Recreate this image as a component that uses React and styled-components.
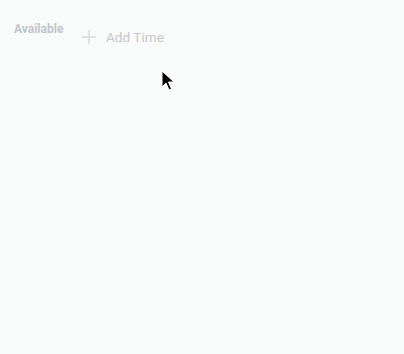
import styled, { createGlobalStyle } from "styled-components";

const Global = createGlobalStyle`
  html, body {
    margin: 0;
    background: #f9fbfa;
    font-family: Roboto, "Noto Sans", sans-serif;
  }
`;

const Page = styled.div`
  position: relative;
  width: 404px;
  height: 354px;
  background: #f9fbfa;
`;

const Row = styled.div`
  display: flex;
  align-items: flex-start;
  padding: 21px 0 0 14px;
`;

const Label = styled.div`
  font-size: 12px;
  font-weight: 700;
  color: #c2c5cb;
  line-height: 16px;
  width: 67px;
`;

const AddButton = styled.button`
  display: flex;
  align-items: center;
  gap: 9px;
  border: none;
  background: none;
  padding: 0;
  margin-top: 8px;
  font-family: inherit;
  font-size: 13.6px;
  color: #c6c7c9;
  cursor: pointer;
`;

const Cursor = styled.svg`
  position: absolute;
  left: 161px;
  top: 70px;
`;

export default function App() {
  return (
    <Page>
      <Global />
      <Row>
        <Label>Available</Label>
        <AddButton>
          <svg width="16" height="16" viewBox="0 0 16 16">
            <path d="M8 1v14M1 8h14" stroke="#d9dadc" strokeWidth="1.5" />
          </svg>
          Add Time
        </AddButton>
      </Row>
      <Cursor width="14" height="22" viewBox="0 0 14 22">
        <path
          d="M1 1v16l4-4 3 7 2.5-1-3-7H13z"
          fill="#000"
          stroke="#fff"
          strokeWidth="1"
        />
      </Cursor>
    </Page>
  );
}
